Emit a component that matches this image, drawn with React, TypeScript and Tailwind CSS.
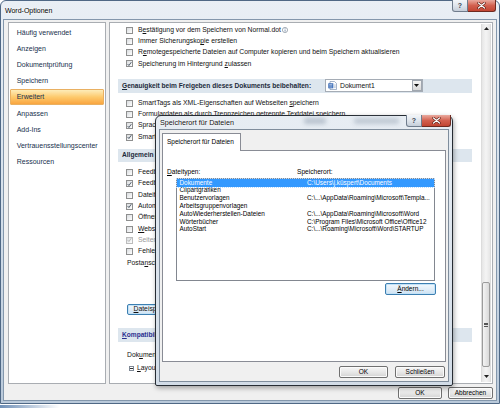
import React from 'react';

const FONT = "font-['Liberation_Sans',Arial,sans-serif]";

function Check({ checked = false, disabled = false }: { checked?: boolean; disabled?: boolean }) {
  return (
    <span
      className={`w-[7px] h-[7px] shrink-0 border flex items-center justify-center bg-gradient-to-br from-[#d9dcdf] to-white ${
        disabled ? 'border-[#bcbcbc]' : 'border-[#8e8f8f]'
      }`}
    >
      {checked && (
        <svg width="6" height="6" viewBox="0 0 6 6">
          <path d="M0.8 3.1 L2.3 4.8 L5.2 0.8" fill="none" stroke={disabled ? '#a8a8a8' : '#1b2a3d'} strokeWidth="0.9" />
        </svg>
      )}
    </span>
  );
}

function Row({ checked, disabled, children }: { checked?: boolean; disabled?: boolean; children: React.ReactNode }) {
  return (
    <div className="h-[11.3px] flex items-center pl-[8px] gap-[5px] whitespace-nowrap">
      <Check checked={checked} disabled={disabled} />
      <span className={disabled ? 'text-[#9a9a9a]' : ''}>{children}</span>
    </div>
  );
}

function U({ children }: { children: React.ReactNode }) {
  return <span className="underline underline-offset-[1px] decoration-[0.6px]">{children}</span>;
}

function Btn({ w, children, focus = false }: { w: string; children: React.ReactNode; focus?: boolean }) {
  return (
    <div
      className={`${w} h-[11.5px] shrink-0 rounded-[2px] border flex items-center justify-center text-[6.5px] bg-gradient-to-b ${
        focus
          ? 'border-[#3c7fb1] from-[#f2f8fc] via-[#e2eef8] to-[#cde2f2] shadow-[inset_0_0_0_1px_#c4e2f7]'
          : 'border-[#707070] from-[#f6f6f6] via-[#e8e8e8] to-[#d3d3d3] shadow-[inset_0_0_0_1px_#fbfbfb]'
      }`}
    >
      {children}
    </div>
  );
}

function HelpCap({ w }: { w: string }) {
  return (
    <div className={`${w} h-[12px] rounded-bl-[3px] border border-t-0 border-[#6f7c8c] bg-gradient-to-b from-[#f3f6f9] via-[#dfe5ec] to-[#c5ced9] flex items-center justify-center text-[7px] font-bold text-[#3a4552]`}>
      ?
    </div>
  );
}

function CloseCap({ w }: { w: string }) {
  return (
    <div className={`${w} h-[12px] rounded-br-[3px] border border-t-0 border-l-0 border-[#6e2a20] bg-gradient-to-b from-[#e9aa9f] via-[#d2604f] to-[#c24532] flex items-center justify-center`}>
      <svg width="9" height="7" viewBox="0 0 9 7">
        <path d="M1.5 1 L7.5 6 M7.5 1 L1.5 6" stroke="#5a1e16" strokeWidth="2.4" strokeLinecap="round" />
        <path d="M1.5 1 L7.5 6 M7.5 1 L1.5 6" stroke="#ffffff" strokeWidth="1.2" strokeLinecap="round" />
      </svg>
    </div>
  );
}

const navItems = [
  'Häufig verwendet',
  'Anzeigen',
  'Dokumentprüfung',
  'Speichern',
  'Erweitert',
  'Anpassen',
  'Add-Ins',
  'Vertrauensstellungscenter',
  'Ressourcen',
];

function Nav() {
  return (
    <div className="w-[98px] h-full shrink-0 border border-[#a9adb2] bg-white pt-[1px] text-[7px] text-[#17304d]">
      {navItems.map((item) =>
        item === 'Erweitert' ? (
          <div
            key={item}
            className="mx-[1px] h-[16.2px] flex items-center pl-[5.7px] border border-[#e9b062] rounded-[1px] bg-gradient-to-b from-[#fdecb8] via-[#fdca6c] to-[#f9a53f]"
          >
            {item}
          </div>
        ) : (
          <div key={item} className="h-[16.2px] flex items-center pl-[7.7px]">
            {item}
          </div>
        )
      )}
    </div>
  );
}

function Band({ h, children, color = 'text-[#1c2a3a]' }: { h: string; children: React.ReactNode; color?: string }) {
  return (
    <div className={`w-[354px] ${h} bg-[#dde6ee] flex items-center pl-[4px] font-bold text-[6.6px] whitespace-nowrap ${color}`}>
      {children}
    </div>
  );
}

function Scrollbar() {
  return (
    <div className="mt-[1px] w-[10px] h-[358px] border-x border-[#dcdcdc] bg-gradient-to-r from-[#e6e6e6] via-[#f4f4f4] to-[#e6e6e6] flex flex-col items-center">
      <div className="h-[9px] flex items-center">
        <svg width="5" height="3" viewBox="0 0 5 3">
          <path d="M0 3 L2.5 0 L5 3 Z" fill="#222" />
        </svg>
      </div>
      <div className="flex-1" />
      <div className="w-[8px] h-[85px] rounded-[2px] border border-[#9b9b9b] bg-gradient-to-r from-[#f4f4f4] to-[#d9d9d9] flex flex-col items-center justify-center gap-[1px]">
        <div className="w-[4px] h-[0.6px] bg-[#555]" />
        <div className="w-[4px] h-[0.6px] bg-[#555]" />
        <div className="w-[4px] h-[0.6px] bg-[#555]" />
      </div>
      <div className="h-[15px] flex items-end pb-[4px]">
        <svg width="5" height="3" viewBox="0 0 5 3">
          <path d="M0 0 L2.5 3 L5 0 Z" fill="#222" />
        </svg>
      </div>
    </div>
  );
}

function Main() {
  return (
    <div className="flex-1 h-full border border-[#a9adb2] bg-white flex">
      <div className="w-[371px] overflow-hidden pl-[8px] pt-[1.4px] text-[6.8px] text-[#111]">
        <Row>
          <span className="flex items-center gap-[1.5px]">
            <span>
              B<U>e</U>stätigung vor dem Speichern von Normal.dot
            </span>
            <svg width="6" height="6" viewBox="0 0 6 6">
              <circle cx="3" cy="3" r="2.6" fill="none" stroke="#6c7a8a" strokeWidth="0.6" />
              <rect x="2.7" y="2.5" width="0.7" height="2.1" fill="#4b6a8f" />
              <rect x="2.7" y="1.3" width="0.7" height="0.7" fill="#4b6a8f" />
            </svg>
          </span>
        </Row>
        <Row>
          Immer Sicherungsko<U>p</U>ie erstellen
        </Row>
        <Row>
          R<U>e</U>motegespeicherte Dateien auf Computer kopieren und beim Speichern aktualisieren
        </Row>
        <Row checked>
          Speicherung im Hintergrund <U>z</U>ulassen
        </Row>

        <div className="mt-[9.4px]">
          <Band h="h-[14px]">
            <span className="w-[203px] shrink-0">
              <U>G</U>enauigkeit beim Freigeben dieses Dokuments beibehalten:
            </span>
            <div className="w-[98px] h-[13px] border border-[#a5acb5] bg-white flex items-center pl-[2px] font-normal text-[6.8px] text-[#111]">
              <svg width="9" height="9" viewBox="0 0 9 9" className="shrink-0">
                <path d="M2 0.5 H6.5 L8.5 2.5 V8.5 H2 Z" fill="#fff" stroke="#6b85a8" strokeWidth="0.6" />
                <rect x="0.3" y="2.3" width="5" height="5" fill="#2f63b3" />
                <path d="M1.2 3.5 H4.4 M1.2 4.8 H4.4 M1.2 6.1 H4.4" stroke="#dfe9f7" strokeWidth="0.6" />
                <path d="M6 4 H7.8 M6 5.3 H7.8 M6 6.6 H7.8" stroke="#8aa0bf" strokeWidth="0.5" />
              </svg>
              <span className="ml-[3px] flex-1">Dokument1</span>
              <div className="w-[10px] h-[11px] mr-[0.5px] border border-[#a0a7b0] bg-gradient-to-b from-[#f5f5f5] to-[#d8d8d8] flex items-center justify-center">
                <svg width="5" height="3" viewBox="0 0 5 3">
                  <path d="M0 0 L2.5 3 L5 0 Z" fill="#111" />
                </svg>
              </div>
            </div>
          </Band>
        </div>

        <div className="mt-[4.65px]">
          <Row>
            SmartTags als XML-Eigenschaften auf Webseiten <U>s</U>peichern
          </Row>
          <Row>Formulardaten als durch Trennzeichen getrennte Textdatei speichern</Row>
          <Row checked>Sprachliche Daten einbetten</Row>
          <Row checked>SmartTags einbetten</Row>
        </div>

        <div className="mt-[6.65px]">
          <Band h="h-[12.5px]">Allgemein</Band>
        </div>

        <div className="mt-[5px]">
          <Row>Feedback mit Sound</Row>
          <Row checked>Feedback mit Animation</Row>
          <Row>Dateiformatkonvertierung beim Öffnen bestätigen</Row>
          <Row checked>Automatische Verknüpfungen beim Öffnen aktualisieren</Row>
          <Row>Öffnen eines Dokuments in der Entwurfsansicht zulassen</Row>
          <Row>
            <U>W</U>ebseiten im Hintergrund laden
          </Row>
          <Row checked disabled>
            Seitenumbruch im Hintergrund
          </Row>
          <Row>Fehler der Benutzeroberfläche von Add-Ins anzeigen</Row>
          <div className="h-[11.3px] flex items-center pl-[9px] whitespace-nowrap">
            Posta<U>n</U>schrift:
          </div>
        </div>

        <div className="mt-[35.2px] pl-[9px]">
          <Btn w="w-[72px]" focus>
            <span className="text-[6.8px]">
              <U>D</U>ateispeicherorte...
            </span>
          </Btn>
        </div>

        <div className="mt-[12.8px]">
          <Band h="h-[14.4px]" color="text-[#2b2f8f]">
            <U>K</U>ompatibilitätsoptionen für:
          </Band>
        </div>

        <div className="mt-[6.9px] h-[11.3px] flex items-center pl-[9px] whitespace-nowrap">
          Dok<U>u</U>ment gestalten, als wäre es erstellt in:
        </div>
        <div className="mt-[2.4px] h-[11.3px] flex items-center pl-[11px] gap-[3px] whitespace-nowrap">
          <span className="w-[5px] h-[5px] border border-[#7d8794] bg-white flex items-center justify-center">
            <span className="w-[3px] h-[0.7px] bg-[#333]" />
          </span>
          <span>
            <U>L</U>ayoutoptionen
          </span>
        </div>
      </div>
      <Scrollbar />
    </div>
  );
}

const fileTypes: [string, string][] = [
  ['Dokumente', 'C:\\Users\\j.küspert\\Documents'],
  ['Clipartgrafiken', ''],
  ['Benutzervorlagen', 'C:\\...\\AppData\\Roaming\\Microsoft\\Templa...'],
  ['Arbeitsgruppenvorlagen', ''],
  ['AutoWiederherstellen-Dateien', 'C:\\...\\AppData\\Roaming\\Microsoft\\Word'],
  ['Wörterbücher', 'C:\\Program Files\\Microsoft Office\\Office12'],
  ['AutoStart', 'C:\\...\\Roaming\\Microsoft\\Word\\STARTUP'],
];

function Dialog() {
  return (
    <div className="absolute left-[155px] top-[115px] w-[298px] h-[271px] rounded-t-[6px] rounded-b-[2px] border border-[#262c33] bg-gradient-to-b from-[#e7edf3] via-[#dde5ee] to-[#d2dce7] shadow-[1px_2px_5px_rgba(0,0,0,0.35)] flex flex-col px-[3px] pb-[3px]">
      <div className="relative h-[13px] flex items-center pl-[1px] text-[7.2px] text-[#111]">
        <span className="absolute left-[145px] top-[2px] w-[22px] h-[6px] rounded-[2px] bg-[#9aa7b6] opacity-60 blur-[2px]" />
        <span className="absolute left-[195px] top-[2px] w-[45px] h-[6px] rounded-[2px] bg-[#9aa7b6] opacity-50 blur-[2px]" />
        <span className="relative [text-shadow:0_0_3px_#fff,0_0_2px_#fff]">Speicherort für Dateien</span>
      </div>
      <div className="absolute top-[-1px] right-[1px] flex">
        <HelpCap w="w-[16px]" />
        <CloseCap w="w-[29px]" />
      </div>
      <div className="flex-1 border border-[#7f8d9c] bg-[#f0f0f0] flex flex-col px-[2px] pt-[3px]">
        <div className="relative z-10 -mb-[1px] w-[79px] h-[18px] border border-b-0 border-[#898c95] bg-white flex items-center pl-[4px] pb-[1px] text-[6.5px]">
          Speicherort für Dateien
        </div>
        <div className="h-[212px] border border-[#898c95] bg-white pt-[17px] pl-[4px] text-[6.6px]">
          <div className="h-[8px] flex items-center">
            <span className="w-[130px]">
              <U>D</U>ateitypen:
            </span>
            <span>Speicherort:</span>
          </div>
          <div className="mt-[2px] ml-[9px] w-[259px] h-[103px] border border-[#828790] bg-white text-[6.4px]">
            {fileTypes.map(([type, path], i) => (
              <div
                key={type}
                className={`h-[7.8px] flex items-center whitespace-nowrap ${
                  i === 0 ? 'bg-[#3399ff] text-white outline outline-[0.6px] outline-dotted outline-[#b9dcff] -outline-offset-[0.6px]' : ''
                }`}
              >
                <span className="w-[130px] shrink-0 pl-[2.5px]">{type}</span>
                <span>{path}</span>
              </div>
            ))}
          </div>
          <div className="mt-[2px] ml-[9px] w-[260px] flex justify-end">
            <Btn w="w-[51px]" focus>
              <span>
                <U>Ä</U>ndern...
              </span>
            </Btn>
          </div>
        </div>
        <div className="mt-[4px] flex justify-end gap-[7px] pr-[1px]">
          <Btn w="w-[49px]">OK</Btn>
          <Btn w="w-[50px]">Schließen</Btn>
        </div>
      </div>
    </div>
  );
}

export default function App() {
  return (
    <div className={`relative w-[500px] h-[408px] overflow-hidden bg-white leading-none text-black ${FONT}`}>
      <div className="relative w-[500px] h-[404px] rounded-t-[6px] border border-[#4f6885] bg-gradient-to-b from-[#e9eff5] via-[#d5e0eb] to-[#b9c9da] flex flex-col">
        <div className="h-[18px] flex items-center pl-[4px]">
          <span className="text-[7px] [text-shadow:0_0_4px_#fff,0_0_2px_#fff]">Word-Optionen</span>
        </div>
        <div className="absolute top-[-1px] right-[3px] flex">
          <HelpCap w="w-[16px]" />
          <CloseCap w="w-[28px]" />
        </div>
        <div className="flex-1 mx-[2px] mb-[2px] border border-[#8397ac] bg-[#f0f0f0] flex flex-col">
          <div className="h-[362px] mt-[2px] ml-[4px] mr-[3px] flex gap-[3px]">
            <Nav />
            <Main />
          </div>
          <div className="mt-[3px] flex justify-end gap-[6px] pr-[3px] text-[6.8px]">
            <Btn w="w-[44px]">OK</Btn>
            <Btn w="w-[45px]">Abbrechen</Btn>
          </div>
        </div>
      </div>
      <div className="w-[60px] h-[3px] mt-[0.5px] bg-gradient-to-r from-[#6f90b8] to-transparent" />
      <Dialog />
    </div>
  );
}
